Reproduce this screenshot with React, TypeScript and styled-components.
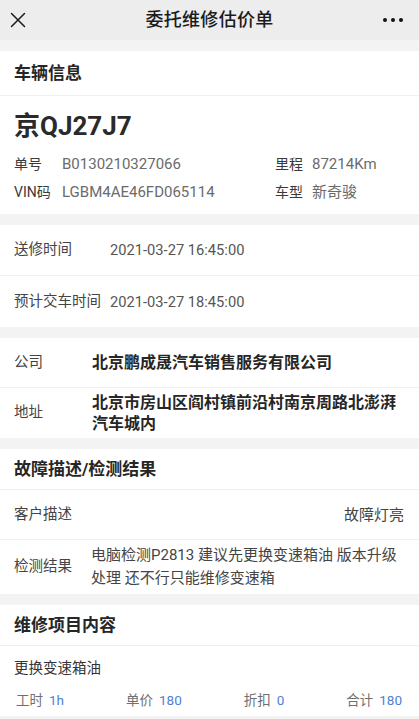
import React from "react";
import styled, { createGlobalStyle } from "styled-components";

const Global = createGlobalStyle`
  html, body { margin: 0; padding: 0; background: #f3f3f3; }
  body { font-family: Roboto, "Noto Sans CJK SC", "Noto Sans", sans-serif; color: #333; }
  * { box-sizing: border-box; }
`;

const Page = styled.div`
  width: 419px;
  min-height: 719px;
  background: #f3f3f3;
  display: flex;
  flex-direction: column;
  gap: 11px;
  padding-bottom: 20px;
`;

const Header = styled.header`
  height: 40px;
  background: #ededed;
  display: grid;
  grid-template-columns: 60px 1fr 60px;
  align-items: center;
  padding: 0 10px;
`;

const HeaderTitle = styled.h1`
  margin: 0;
  text-align: center;
  font-size: 18px;
  line-height: 24px;
  font-weight: 500;
  color: #1b1b1b;
  letter-spacing: 0.3px;
`;

const IconButton = styled.div<{ $right?: boolean }>`
  display: flex;
  justify-content: ${(p) => (p.$right ? "flex-end" : "flex-start")};
  align-items: center;
`;

const Section = styled.section`
  background: #fff;
  display: flex;
  flex-direction: column;
`;

const SectionTitle = styled.div<{ $h: number }>`
  height: ${(p) => p.$h}px;
  display: flex;
  align-items: center;
  padding: 0 14px;
  font-size: 17px;
  line-height: 22px;
  font-weight: 700;
  color: #262626;
  border-bottom: 1px solid #f0f0f0;
`;

const Plate = styled.div`
  padding: 15px 14px 0;
  font-size: 26px;
  line-height: 30px;
  font-weight: 700;
  color: #2a2a2a;
`;

const InfoGrid = styled.div`
  display: grid;
  grid-template-columns: 261px 1fr;
  padding: 9px 14px 8px;
`;

const InfoItem = styled.div<{ $labelW?: number }>`
  display: flex;
  align-items: baseline;
  height: 28px;
  padding-top: 4px;
  font-size: 14px;
  line-height: 20px;
  white-space: nowrap;
  gap: ${(p) => (p.$labelW ? 0 : 9)}px;
`;

const InfoLabel = styled.span<{ $w?: number }>`
  color: #3a3a3a;
  ${(p) => (p.$w ? `width: ${p.$w}px;` : "")}
`;

const InfoValue = styled.span`
  color: #6b6b6b;
  font-size: 15px;
`;

const Row = styled.div<{ $min: number; $justify?: boolean }>`
  min-height: ${(p) => p.$min}px;
  display: flex;
  align-items: center;
  justify-content: ${(p) => (p.$justify ? "space-between" : "flex-start")};
  padding: 4px 15px 4px 14px;
  border-bottom: 1px solid #f0f0f0;
  &:last-child { border-bottom: none; }
`;

const RowLabel = styled.div<{ $w: number }>`
  flex: 0 0 ${(p) => p.$w}px;
  font-size: 14.5px;
  line-height: 20px;
  color: #444;
`;

const TimeValue = styled.div`
  font-size: 14.7px;
  line-height: 20px;
  color: #555;
`;

const StrongValue = styled.div`
  flex: 1;
  font-size: 16px;
  line-height: 21px;
  font-weight: 700;
  color: #262626;
`;

const PlainValue = styled.div`
  flex: 1;
  font-size: 15px;
  line-height: 23px;
  color: #444;
`;

const RightValue = styled.div`
  font-size: 15px;
  line-height: 20px;
  color: #444;
`;

const ItemName = styled.div`
  padding: 13px 14px 0;
  font-size: 14.5px;
  line-height: 20px;
  color: #333;
`;

const Stats = styled.div`
  display: flex;
  justify-content: space-between;
  align-items: center;
  height: 32px;
  padding: 0 17px 0 16px;
  margin-top: 5px;
  font-size: 13.5px;
  line-height: 18px;
`;

const Stat = styled.span`
  color: #6f6f6f;
  white-space: nowrap;
  b {
    font-weight: 400;
    color: #4d7fd6;
    margin-left: 6px;
  }
`;

const Dots = styled.div`
  display: flex;
  gap: 4px;
  padding-right: 6px;
  span {
    width: 4px;
    height: 4px;
    border-radius: 50%;
    background: #111;
  }
`;

export default function App() {
  return (
    <>
      <Global />
      <Page>
        <Header>
          <IconButton>
            <svg width="16" height="16" viewBox="0 0 16 16">
              <path d="M1.5 1.5 L14.5 14.5 M14.5 1.5 L1.5 14.5" stroke="#1b1b1b" strokeWidth="1.5" strokeLinecap="round" />
            </svg>
          </IconButton>
          <HeaderTitle>委托维修估价单</HeaderTitle>
          <IconButton $right>
            <Dots>
              <span />
              <span />
              <span />
            </Dots>
          </IconButton>
        </Header>

        <Section>
          <SectionTitle $h={45}>车辆信息</SectionTitle>
          <Plate>京QJ27J7</Plate>
          <InfoGrid>
            <InfoItem $labelW={48}>
              <InfoLabel $w={48}>单号</InfoLabel>
              <InfoValue>B0130210327066</InfoValue>
            </InfoItem>
            <InfoItem>
              <InfoLabel>里程</InfoLabel>
              <InfoValue>87214Km</InfoValue>
            </InfoItem>
            <InfoItem $labelW={48}>
              <InfoLabel $w={48}>VIN码</InfoLabel>
              <InfoValue>LGBM4AE46FD065114</InfoValue>
            </InfoItem>
            <InfoItem>
              <InfoLabel>车型</InfoLabel>
              <InfoValue>新奇骏</InfoValue>
            </InfoItem>
          </InfoGrid>
        </Section>

        <Section>
          <Row $min={51}>
            <RowLabel $w={96}>送修时间</RowLabel>
            <TimeValue>2021-03-27 16:45:00</TimeValue>
          </Row>
          <Row $min={51}>
            <RowLabel $w={96}>预计交车时间</RowLabel>
            <TimeValue>2021-03-27 18:45:00</TimeValue>
          </Row>
        </Section>

        <Section>
          <Row $min={50}>
            <RowLabel $w={78}>公司</RowLabel>
            <StrongValue>北京鹏成晟汽车销售服务有限公司</StrongValue>
          </Row>
          <Row $min={50}>
            <RowLabel $w={78}>地址</RowLabel>
            <StrongValue>北京市房山区阎村镇前沿村南京周路北澎湃汽车城内</StrongValue>
          </Row>
        </Section>

        <Section>
          <SectionTitle $h={41}>故障描述/检测结果</SectionTitle>
          <Row $min={50} $justify>
            <RowLabel $w={78}>客户描述</RowLabel>
            <RightValue>故障灯亮</RightValue>
          </Row>
          <Row $min={52}>
            <RowLabel $w={77}>检测结果</RowLabel>
            <PlainValue>电脑检测P2813 建议先更换变速箱油 版本升级处理 还不行只能维修变速箱</PlainValue>
          </Row>
        </Section>

        <Section>
          <SectionTitle $h={41}>维修项目内容</SectionTitle>
          <ItemName>更换变速箱油</ItemName>
          <Stats>
            <Stat>工时<b>1h</b></Stat>
            <Stat>单价<b>180</b></Stat>
            <Stat>折扣<b>0</b></Stat>
            <Stat>合计<b>180</b></Stat>
          </Stats>
        </Section>
      </Page>
    </>
  );
}
